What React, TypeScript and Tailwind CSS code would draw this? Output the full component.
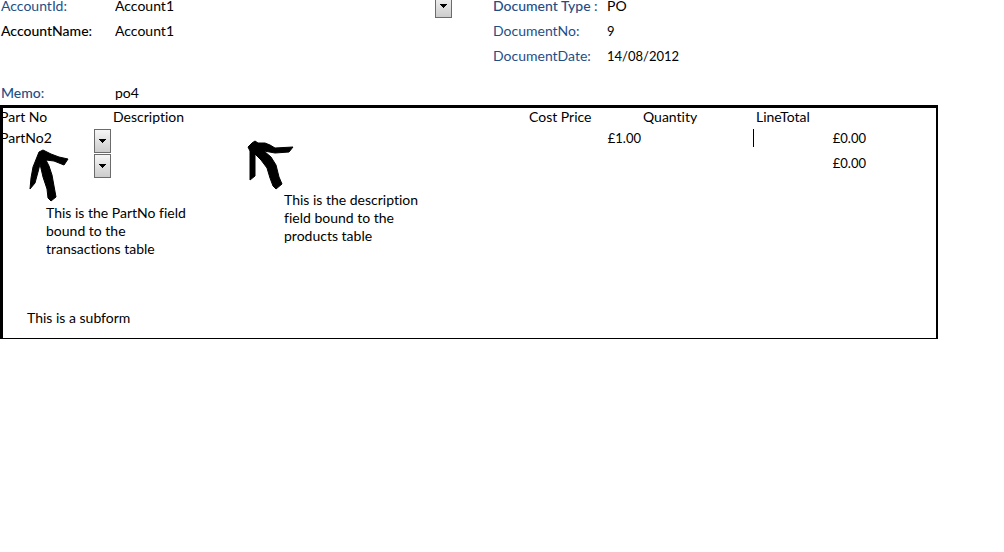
import React, { useState } from "react";

type OrderLine = {
partNo: string;
description: string;
costPrice: string;
quantity: string;
lineTotal: string;
};

const accounts = ["Account1"];
const parts = ["", "PartNo2"];

const initialLines: OrderLine[] = [
{ partNo: "PartNo2", description: "", costPrice: "£1.00", quantity: "", lineTotal: "£0.00" },
{ partNo: "", description: "", costPrice: "", quantity: "", lineTotal: "£0.00" },
];

const cellInput = "block h-[18px] w-full min-w-0 bg-transparent p-0 leading-[18px] outline-none";
const fieldInput = "block h-6 w-full bg-transparent p-0 leading-6 outline-none";

type ComboProps = {
id?: string;
label?: string;
value: string;
options: string[];
selectClass: string;
onChange: (value: string) => void;
};

function Combo({ id, label, value, options, selectClass, onChange }: ComboProps) {
return (
<div className="relative h-6 w-full">
<select
id={id}
aria-label={label}
value={value}
onChange={(e) => onChange(e.target.value)}
className={`appearance-none ${selectClass}`}
>
{options.map((o) => (
<option key={o} value={o}>
{o}
</option>
))}
</select>
<span className="pointer-events-none absolute right-0 top-0 flex h-6 w-[17px] items-center justify-center border border-[#6b6b6b] bg-linear-to-b from-[#f6f6f6] to-[#cccccc]">
<svg width="7" height="4" viewBox="0 0 7 4" shapeRendering="crispEdges" aria-hidden="true">
<path d="M0 0h7v1h-1v1h-1v1h-1v1h-1v-1h-1v-1h-1v-1h-1z" fill="#000" />
</svg>
</span>
</div>
);
}

type FieldProps = {
id: string;
label: string;
labelClass: string;
children: React.ReactNode;
};

function Field({ id, label, labelClass, children }: FieldProps) {
return (
<div className="flex h-[25px]">
<label htmlFor={id} className={`w-[114px] shrink-0 leading-6 ${labelClass}`}>
{label}
</label>
<div className="min-w-0 flex-1">{children}</div>
</div>
);
}

export default function App() {
const [account, setAccount] = useState("Account1");
const [lines, setLines] = useState(initialLines);

function updateLine(index: number, patch: Partial<OrderLine>) {
setLines((prev) => prev.map((l, i) => (i === index ? { ...l, ...patch } : l)));
}

return (
<div className="min-h-screen overflow-hidden bg-white font-['Lato',sans-serif] text-[14px] text-black [font-variant-ligatures:none]">
<form>
{/* the form is scrolled a little, so the first row sits against the top edge */}
<div className="-mt-1.5 flex gap-[41px]">
<div className="w-[452px] shrink-0 pl-px">
<Field id="account" label="AccountId:" labelClass="text-[#1f4e87]">
<Combo id="account" value={account} options={accounts} selectClass={fieldInput} onChange={setAccount} />
</Field>
<Field id="account-name" label="AccountName:" labelClass="font-medium">
<input id="account-name" type="text" defaultValue="Account1" className={fieldInput} />
</Field>
</div>

<div className="min-w-0 flex-1">
<Field id="doc-type" label="Document Type :" labelClass="font-medium text-[#1f4e87]">
<input id="doc-type" type="text" defaultValue="PO" className={fieldInput} />
</Field>
<Field id="doc-no" label="DocumentNo:" labelClass="text-[#1f4e87]">
<input id="doc-no" type="text" defaultValue="9" className={`${fieldInput} text-[13px]`} />
</Field>
<Field id="doc-date" label="DocumentDate:" labelClass="text-[#1f4e87]">
<input id="doc-date" type="text" defaultValue="14/08/2012" className={`${fieldInput} text-[13px]`} />
</Field>
</div>
</div>

<div className="mt-3 pl-px">
<Field id="memo" label="Memo:" labelClass="font-medium text-[#1f4e87]">
<input id="memo" type="text" defaultValue="po4" className={fieldInput} />
</Field>
</div>

{/* Subform */}
<section className="relative -mt-px max-w-[938px] overflow-hidden border-b border-l-3 border-r-2 border-t-3 border-black">
<div className="-ml-[3px]">
<table className="w-full table-fixed border-collapse">
<colgroup>
<col className="w-[113px]" />
<col />
<col className="w-[114px]" />
<col className="w-[113px]" />
<col className="w-[180px]" />
</colgroup>
<thead>
<tr className="h-[21px] text-left align-top leading-[18px]">
<th className="p-0 font-normal">Part No</th>
<th className="p-0 font-normal">Description</th>
<th className="p-0 font-normal">Cost Price</th>
<th className="p-0 font-normal">Quantity</th>
<th className="p-0 font-normal">LineTotal</th>
</tr>
</thead>
<tbody>
{lines.map((line, i) => (
<tr key={i} className="h-[25px] align-top">
<td className="p-0 pr-0.5">
<Combo
label="Part No"
value={line.partNo}
options={parts}
selectClass={cellInput}
onChange={(partNo) => updateLine(i, { partNo })}
/>
</td>
<td className="p-0">
<input
aria-label="Description"
value={line.description}
onChange={(e) => updateLine(i, { description: e.target.value })}
className={cellInput}
/>
</td>
<td className="p-0 pr-0.5">
<input
aria-label="Cost Price"
value={line.costPrice}
onChange={(e) => updateLine(i, { costPrice: e.target.value })}
className={`${cellInput} text-right text-[13px]`}
/>
</td>
<td className="p-0 pr-0.5">
<div className="flex">
<input
aria-label="Quantity"
value={line.quantity}
onChange={(e) => updateLine(i, { quantity: e.target.value })}
className={`${cellInput} text-right text-[13px]`}
/>
{i === 0 && <span className="h-[18px] w-px shrink-0 bg-black" />}
</div>
</td>
<td className="p-0 pr-[70px]">
<input
aria-label="LineTotal"
value={line.lineTotal}
readOnly
className={`${cellInput} text-right text-[13px]`}
/>
</td>
</tr>
))}
</tbody>
</table>

<div className="flex leading-[18px]">
<p className="ml-[46px] mt-[25px] w-[238px]">
This is the PartNo field
<br />
bound to the
<br />
transactions table
</p>
<p className="mt-3">
This is the description
<br />
field bound to the
<br />
products table
</p>
</div>
<p className="mb-[11px] ml-[27px] mt-[51px] leading-[18px]">This is a subform</p>
</div>

{/* hand drawn pointers over the grid */}
<svg className="pointer-events-none absolute left-[25px] top-[40px]" width="42" height="56" viewBox="0 0 42 56" stroke="#000" strokeLinejoin="round" aria-hidden="true">
<path d="M11 4L15 2L19 4L23 6L31 9L40 11L36 17L31 15L26 13L18 12L21 18L24 27L26 38L28 49L23 53L20 50L19 41L15 29L12 16L10 24L7 35L2 41L3 30L5 19L9 9Z" />
</svg>
<svg className="pointer-events-none absolute left-[244px] top-[32px]" width="48" height="52" viewBox="0 0 48 52" stroke="#000" strokeLinejoin="round" aria-hidden="true">
<path d="M5 3L8 1L11 3L18 3L23 5L28 8L46 7L42 12L28 13L17 11L24 17L29 25L32 37L35 44L29 49L26 46L23 38L20 28L14 20L8 14L8 36L3 40L3 11L1 7Z" />
</svg>
</section>
</form>
</div>
);
}
